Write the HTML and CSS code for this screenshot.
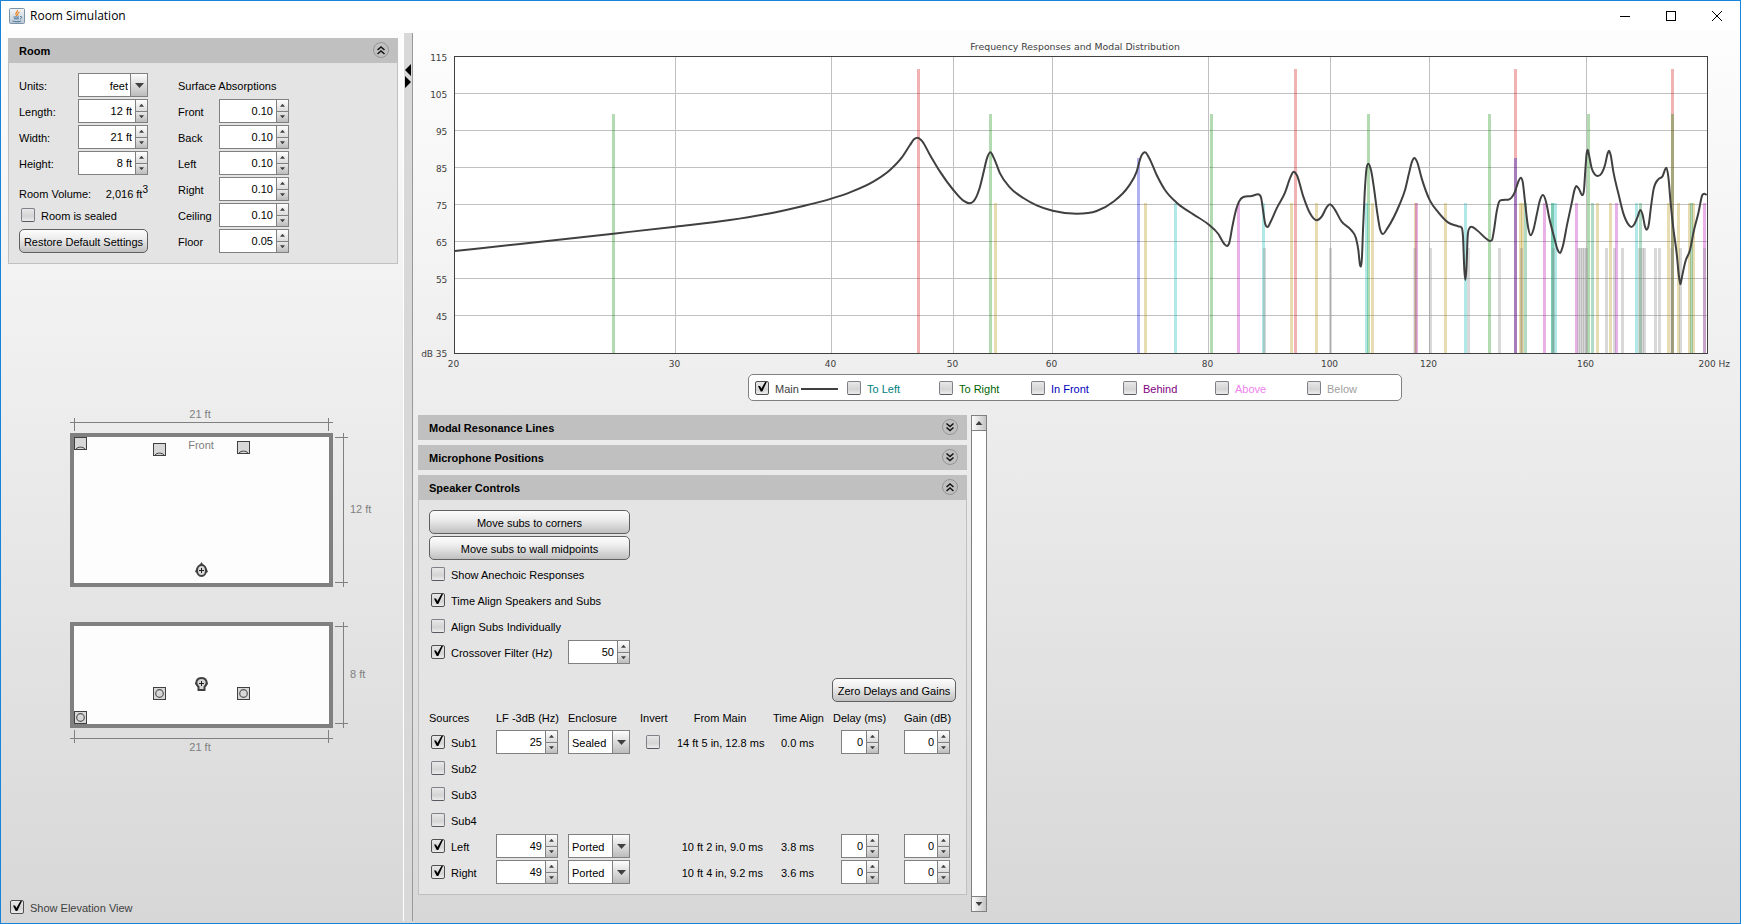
FILE: index.html
```html
<!DOCTYPE html>
<html lang="en">
<head>
<meta charset="utf-8">
<title>Room Simulation</title>
<link rel="stylesheet" href="styles.css">
</head>
<body>
<svg width="0" height="0" class="defs" aria-hidden="true">
  <symbol id="chev-down" viewBox="0 0 16 16"><circle cx="8" cy="8" r="7.5" fill="none" stroke="#959595"/><path d="M4.5 4.5 8 7.5 11.5 4.5M4.5 8.5 8 11.5 11.5 8.5" fill="none" stroke="#111" stroke-width="1.5"/></symbol>
  <symbol id="chev-up" viewBox="0 0 16 16"><circle cx="8" cy="8" r="7.5" fill="none" stroke="#959595"/><path d="M4.5 8 8 5 11.5 8M4.5 12 8 9 11.5 12" fill="none" stroke="#111" stroke-width="1.5"/></symbol>
</svg>
<div class="window">
  <header class="titlebar">
    <svg class="app-icon" viewBox="0 0 16 16" width="16" height="16">
      <defs><linearGradient id="ic" x1="0" y1="0" x2="0" y2="1"><stop offset="0" stop-color="#f4f6f8"/><stop offset="1" stop-color="#bcc8d4"/></linearGradient></defs>
      <rect x=".5" y=".5" width="15" height="15" rx="1" fill="url(#ic)" stroke="#7d93a8"/>
      <path d="M8.5 2C9 4 6 4.500 7 6.500L8 8M10.500 4C8 5.500 8.500 6 9 7.500" fill="none" stroke="#e8801c" stroke-width="1.200"/>
      <path d="M4.500 9H10M5 10.800H10M3.500 13C6 14 10 14 12 13M11 8.500C13.500 8 13 10.500 11 11" fill="none" stroke="#44749c"/>
    </svg>
    <h1 class="window-title">Room Simulation</h1>
    <div class="window-controls">
      <button type="button" aria-label="Minimize"><svg viewBox="0 0 12 12" width="12" height="12"><path d="M1 6.500H11" stroke="#000"/></svg></button>
      <button type="button" aria-label="Maximize"><svg viewBox="0 0 12 12" width="12" height="12"><rect x="1.500" y="1.500" width="9" height="9" fill="none" stroke="#000"/></svg></button>
      <button type="button" aria-label="Close"><svg viewBox="0 0 12 12" width="12" height="12"><path d="M1 1 11 11M11 1 1 11" stroke="#000"/></svg></button>
    </div>
  </header>

  <main class="main">
    <aside class="side">
      <section class="panel">
        <div class="panel-head"><h2>Room</h2><button type="button" class="toggle" aria-label="Collapse Room"><svg><use href="#chev-up"/></svg></button></div>
        <div class="panel-body room">
          <div class="room-size">
            <label for="units">Units:</label>
            <span class="combo combo-right"><select id="units"><option>feet</option><option>metres</option></select></span>
            <label for="len">Length:</label>
            <span class="spin"><input id="len" type="text" value="12 ft"><span class="steps"><button type="button" aria-label="Increase"></button><button type="button" aria-label="Decrease"></button></span></span>
            <label for="wid">Width:</label>
            <span class="spin"><input id="wid" type="text" value="21 ft"><span class="steps"><button type="button" aria-label="Increase"></button><button type="button" aria-label="Decrease"></button></span></span>
            <label for="hei">Height:</label>
            <span class="spin"><input id="hei" type="text" value="8 ft"><span class="steps"><button type="button" aria-label="Increase"></button><button type="button" aria-label="Decrease"></button></span></span>
            <div class="volume"><span>Room Volume:</span><span>2,016 ft<sup>3</sup></span></div>
            <label class="check wide"><input type="checkbox">Room is sealed</label>
            <button type="button" class="btn wide">Restore Default Settings</button>
          </div>
          <div class="absorb">
            <span class="wide">Surface Absorptions</span>
            <label for="a1">Front</label>
            <span class="spin"><input id="a1" type="text" value="0.10"><span class="steps"><button type="button" aria-label="Increase"></button><button type="button" aria-label="Decrease"></button></span></span>
            <label for="a2">Back</label>
            <span class="spin"><input id="a2" type="text" value="0.10"><span class="steps"><button type="button" aria-label="Increase"></button><button type="button" aria-label="Decrease"></button></span></span>
            <label for="a3">Left</label>
            <span class="spin"><input id="a3" type="text" value="0.10"><span class="steps"><button type="button" aria-label="Increase"></button><button type="button" aria-label="Decrease"></button></span></span>
            <label for="a4">Right</label>
            <span class="spin"><input id="a4" type="text" value="0.10"><span class="steps"><button type="button" aria-label="Increase"></button><button type="button" aria-label="Decrease"></button></span></span>
            <label for="a5">Ceiling</label>
            <span class="spin"><input id="a5" type="text" value="0.10"><span class="steps"><button type="button" aria-label="Increase"></button><button type="button" aria-label="Decrease"></button></span></span>
            <label for="a6">Floor</label>
            <span class="spin"><input id="a6" type="text" value="0.05"><span class="steps"><button type="button" aria-label="Increase"></button><button type="button" aria-label="Decrease"></button></span></span>
          </div>
        </div>
      </section>

      <svg class="plan" viewBox="22 410 362 345" width="362" height="345" role="img" aria-label="Room plan and elevation">
        <defs>
          <g id="spk-top"><rect x=".5" y=".5" width="12" height="12" fill="#d8d8d8" stroke="#404040"/><path d="M2 12C4 9.500 9 9.500 11 12" fill="none" stroke="#404040"/></g>
          <g id="spk-front"><rect x=".5" y=".5" width="12" height="12" fill="#d8d8d8" stroke="#404040"/><circle cx="6.500" cy="6.500" r="3.800" fill="none" stroke="#555" stroke-width="1.200"/></g>
        </defs>
        <rect x="72" y="436" width="259" height="150" class="wall"/>
        <rect x="72" y="625" width="259" height="102" class="wall"/>
        <path class="dim" d="M70 423.500H333M74.500 419V432M328.500 419V432M343.500 434V588M335 438.500H348M335 583.500H348M343.500 623V729M335 627.500H348M335 724.500H348M70 739.500H333M74.500 731V744M328.500 731V744"/>
        <g class="plan-text">
          <text x="200" y="419" text-anchor="middle">21 ft</text>
          <text x="201" y="450" text-anchor="middle">Front</text>
          <text x="350" y="514">12 ft</text>
          <text x="350" y="679">8 ft</text>
          <text x="200" y="752" text-anchor="middle">21 ft</text>
        </g>
        <use href="#spk-top" x="74" y="438"/><use href="#spk-top" x="153" y="444"/><use href="#spk-top" x="237" y="442"/>
        <use href="#spk-front" x="74" y="712"/><use href="#spk-front" x="153" y="688"/><use href="#spk-front" x="237" y="688"/>
        <path d="M201.500 563 204 567H199ZM196.500 569 195 573 198 574ZM206.500 569 208 573 205 574Z" fill="#404040"/>
        <ellipse cx="201.500" cy="571.500" rx="4.500" ry="5.500" fill="#d8d8d8" stroke="#404040" stroke-width="2"/>
        <path d="M199 571.500H204M201.500 569V574" stroke="#222"/>
        <path d="M196.500 682 195 684.500 196.500 687ZM206.500 682 208 684.500 206.500 687Z" fill="#404040"/>
        <path d="M198.500 691V688C194 683 197.500 679 201.500 679S209 683 204.500 688V691Z" fill="#d8d8d8" stroke="#404040" stroke-width="2"/>
        <path d="M199 684.500H204M201.500 682V687" stroke="#222"/>
      </svg>

      <label class="check soft"><input type="checkbox" checked>Show Elevation View</label>
    </aside>

    <div class="splitter" role="separator">
      <svg width="8" height="26" viewBox="1 0 8 26"><path d="M8 0V12L2 6ZM2 12V24L8 18Z" fill="#000"/></svg>
    </div>

    <div class="content">
      <svg id="chart" class="chart" viewBox="9 3 3981 1020" role="img" aria-label="Frequency Responses and Modal Distribution"></svg>

      <div class="legend">
        <label class="check c-main"><input type="checkbox" checked>Main<i></i></label>
        <label class="check c-left"><input type="checkbox">To Left</label>
        <label class="check c-right"><input type="checkbox">To Right</label>
        <label class="check c-front"><input type="checkbox">In Front</label>
        <label class="check c-behind"><input type="checkbox">Behind</label>
        <label class="check c-above"><input type="checkbox">Above</label>
        <label class="check c-below"><input type="checkbox">Below</label>
      </div>

      <div class="lower">
        <div class="panels">
          <section class="panel"><div class="panel-head"><h2>Modal Resonance Lines</h2><button type="button" class="toggle" aria-label="Expand Modal Resonance Lines"><svg><use href="#chev-down"/></svg></button></div></section>
          <section class="panel"><div class="panel-head"><h2>Microphone Positions</h2><button type="button" class="toggle" aria-label="Expand Microphone Positions"><svg><use href="#chev-down"/></svg></button></div></section>
          <section class="panel">
            <div class="panel-head"><h2>Speaker Controls</h2><button type="button" class="toggle" aria-label="Collapse Speaker Controls"><svg><use href="#chev-up"/></svg></button></div>
            <div class="panel-body speakers">
              <div class="options">
                <button type="button" class="btn">Move subs to corners</button>
                <button type="button" class="btn">Move subs to wall midpoints</button>
                <label class="check"><input type="checkbox">Show Anechoic Responses</label>
                <label class="check"><input type="checkbox" checked>Time Align Speakers and Subs</label>
                <label class="check"><input type="checkbox">Align Subs Individually</label>
                <div class="crossover">
                  <label class="check"><input type="checkbox" checked>Crossover Filter (Hz)</label>
                  <span class="spin"><input type="text" value="50" aria-label="Crossover frequency"><span class="steps"><button type="button" aria-label="Increase"></button><button type="button" aria-label="Decrease"></button></span></span>
                </div>
              </div>
              <button type="button" class="btn zero">Zero Delays and Gains</button>
              <table class="sources">
                <colgroup><col class="w-src"><col class="w-lf"><col class="w-enc"><col class="w-inv"><col class="w-from"><col class="w-align"><col class="w-delay"><col class="w-gain"></colgroup>
                <thead><tr><th>Sources</th><th>LF -3dB (Hz)</th><th>Enclosure</th><th>Invert</th><th class="mid">From Main</th><th>Time Align</th><th>Delay (ms)</th><th>Gain (dB)</th></tr></thead>
                <tbody>
                  <tr>
                    <td><label class="check"><input type="checkbox" checked>Sub1</label></td>
                    <td><span class="spin"><input type="text" value="25" aria-label="Sub1 LF"><span class="steps"><button type="button" aria-label="Increase"></button><button type="button" aria-label="Decrease"></button></span></span></td>
                    <td><span class="combo"><select aria-label="Sub1 enclosure"><option>Sealed</option><option>Ported</option></select></span></td>
                    <td><label class="check inv"><input type="checkbox" aria-label="Invert Sub1"></label></td>
                    <td class="num">14 ft 5 in, 12.8 ms</td><td class="align">0.0 ms</td>
                    <td><span class="spin delay"><input type="text" value="0" aria-label="Sub1 delay"><span class="steps"><button type="button" aria-label="Increase"></button><button type="button" aria-label="Decrease"></button></span></span></td>
                    <td><span class="spin"><input type="text" value="0" aria-label="Sub1 gain"><span class="steps"><button type="button" aria-label="Increase"></button><button type="button" aria-label="Decrease"></button></span></span></td>
                  </tr>
                  <tr><td><label class="check"><input type="checkbox">Sub2</label></td><td colspan="7"></td></tr>
                  <tr><td><label class="check"><input type="checkbox">Sub3</label></td><td colspan="7"></td></tr>
                  <tr><td><label class="check"><input type="checkbox">Sub4</label></td><td colspan="7"></td></tr>
                  <tr>
                    <td><label class="check"><input type="checkbox" checked>Left</label></td>
                    <td><span class="spin"><input type="text" value="49" aria-label="Left LF"><span class="steps"><button type="button" aria-label="Increase"></button><button type="button" aria-label="Decrease"></button></span></span></td>
                    <td><span class="combo"><select aria-label="Left enclosure"><option>Ported</option><option>Sealed</option></select></span></td>
                    <td></td>
                    <td class="num">10 ft 2 in, 9.0 ms</td><td class="align">3.8 ms</td>
                    <td><span class="spin delay"><input type="text" value="0" aria-label="Left delay"><span class="steps"><button type="button" aria-label="Increase"></button><button type="button" aria-label="Decrease"></button></span></span></td>
                    <td><span class="spin"><input type="text" value="0" aria-label="Left gain"><span class="steps"><button type="button" aria-label="Increase"></button><button type="button" aria-label="Decrease"></button></span></span></td>
                  </tr>
                  <tr>
                    <td><label class="check"><input type="checkbox" checked>Right</label></td>
                    <td><span class="spin"><input type="text" value="49" aria-label="Right LF"><span class="steps"><button type="button" aria-label="Increase"></button><button type="button" aria-label="Decrease"></button></span></span></td>
                    <td><span class="combo"><select aria-label="Right enclosure"><option>Ported</option><option>Sealed</option></select></span></td>
                    <td></td>
                    <td class="num">10 ft 4 in, 9.2 ms</td><td class="align">3.6 ms</td>
                    <td><span class="spin delay"><input type="text" value="0" aria-label="Right delay"><span class="steps"><button type="button" aria-label="Increase"></button><button type="button" aria-label="Decrease"></button></span></span></td>
                    <td><span class="spin"><input type="text" value="0" aria-label="Right gain"><span class="steps"><button type="button" aria-label="Increase"></button><button type="button" aria-label="Decrease"></button></span></span></td>
                  </tr>
                </tbody>
              </table>
            </div>
          </section>
        </div>
        <div class="scrollbar">
          <button type="button" aria-label="Scroll up"></button>
          <div class="track"></div>
          <button type="button" class="down" aria-label="Scroll down"></button>
        </div>
      </div>
    </div>
  </main>
</div>
<script src="chart.js"></script>
</body>
</html>
```
FILE: styles.css
```css
* { box-sizing: border-box; }
body {
  margin: 0;
  font: 11px/13px "Liberation Sans", Arial, sans-serif;
  color: #000;
}
.defs { position: absolute; }
h1, h2 { margin: 0; font-size: inherit; }
button, input, select { font: inherit; color: inherit; margin: 0; padding: 0; border: 0; border-radius: 0; }

.window {
  display: flex;
  flex-direction: column;
  min-height: 100vh;
  border: 1px solid #1883d7;
}
.titlebar {
  display: flex;
  align-items: center;
  height: 30px;
  padding-left: 8px;
  background: #fff;
}
.app-icon { margin-right: 5px; }
.window-title { font: 12px/16px "Open Sans", "Noto Sans", sans-serif; }
.window-controls { display: flex; margin-left: auto; }
.window-controls button { width: 46px; height: 28px; background: none; display: flex; align-items: center; justify-content: center; }

.main {
  flex: 1;
  display: flex;
  background: linear-gradient(#fdfdfd, #d7d7d7);
}
.side {
  flex: 0 0 402px;
  display: flex;
  flex-direction: column;
  justify-content: space-between;
  padding: 7px 5px 8px 7px;
}
.side > .check { padding-left: 2px; }
.soft { color: #404040; }

.panel-head {
  display: flex;
  align-items: center;
  justify-content: space-between;
  height: 25px;
  padding: 0 9px 0 11px;
  background: #c0c0c0;
}
.panel-head h2 { font-weight: bold; padding-top: 2px; }
.toggle { width: 16px; height: 16px; background: none; margin-bottom: 2px; }
.toggle svg { display: block; width: 16px; height: 16px; }
.panel-body { border: 1px solid #c0c0c0; border-top: 0; background: #e4e4e4; padding: 10px; }

.room { display: flex; gap: 30px; }
.room-size, .absorb { display: grid; grid-auto-rows: 24px; gap: 2px 0; align-items: center; }
.room-size { grid-template-columns: 59px 70px; }
.absorb { grid-template-columns: 41px 70px; }
.room-size > label[for], .absorb > label, .absorb > .wide { padding-top: 2px; }
.wide { grid-column: 1 / -1; }
.volume { grid-column: 1 / -1; display: flex; justify-content: space-between; align-self: end; height: 13px; }
.volume sup { font-size: 10px; line-height: 0; vertical-align: 5px; }

.spin, .combo {
  display: flex;
  position: relative;
  width: 100%;
  height: 24px;
  border: 1px solid #808080;
  background: #fff;
}
.spin input { flex: 1; min-width: 0; width: 0; padding: 0 3px 0 0; text-align: right; background: #fff; }
.steps { display: flex; flex-direction: column; width: 12px; border-left: 1px solid #808080; }
.steps button { flex: 1; display: flex; align-items: center; justify-content: center; background: linear-gradient(#fdfdfd, #dcdcdc); }
.steps button + button { border-top: 1px solid #808080; background: linear-gradient(#e8e8e8, #bcbcbc); }
.steps button::before { content: ""; width: 5px; height: 3px; background: #404040; clip-path: polygon(50% 0, 100% 100%, 0 100%); }
.steps button + button::before { clip-path: polygon(0 0, 100% 0, 50% 100%); }

.combo select { appearance: none; width: 100%; padding: 2px 19px 0 3px; background: none; }
.combo-right select { text-align-last: right; }
.combo::before {
  content: "";
  position: absolute;
  top: 0; right: 0; bottom: 0;
  width: 16px;
  border-left: 1px solid #808080;
  background: linear-gradient(#fdfdfd, #bcbcbc);
  pointer-events: none;
}
.combo::after {
  content: "";
  position: absolute;
  top: 9px; right: 3px;
  width: 9px; height: 5px;
  background: #404040;
  clip-path: polygon(0 0, 100% 0, 50% 100%);
  pointer-events: none;
}

.btn {
  height: 24px;
  padding-top: 2px;
  border: 1px solid #606060;
  border-radius: 5px;
  background: linear-gradient(#fdfdfd, #ececec 40%, #c0c0c0);
  text-align: center;
}

/* The caption sits slightly lower than the middle of its box */
.check { display: flex; align-items: flex-end; gap: 6px; height: 16px; }
.check input {
  appearance: none;
  position: relative;
  flex: none;
  width: 14px;
  height: 14px;
  margin-bottom: 1px;
  border: 1px solid #808088;
  border-bottom-color: #585860;
  border-radius: 2px;
  background: linear-gradient(#e8e8e8, #d4d4d4 60%, #ececec);
}
.check input:checked { border-color: #505050; }
.check input:checked::after {
  content: "";
  position: absolute;
  left: 2px; top: 0;
  width: 9px; height: 10px;
  background: #000;
  clip-path: polygon(0 45%, 22% 45%, 38% 70%, 82% 0, 100% 0, 48% 100%, 30% 100%);
}
.room .check, .speakers .check { padding-left: 2px; }

.plan { display: block; align-self: center; flex: none; }
.wall { fill: #fdfdfd; stroke: #808080; stroke-width: 4; }
.dim { fill: none; stroke: #808080; }
.plan-text { fill: #808080; font-size: 11px; }

.splitter {
  flex: 0 0 10px;
  margin: 2px 0;
  padding-top: 31px;
  border-left: 1px solid #fff;
  border-right: 1px solid #999;
  background: #d8d8d8;
}
.splitter svg { display: block; }

.content { flex: 1; min-width: 0; display: flex; flex-direction: column; padding-bottom: 11px; }
.chart { display: block; width: 100%; height: auto; }
.chart text { font-family: "DejaVu Sans", sans-serif; font-size: 27px; fill: #404040; }
.chart .chart-title { font-size: 28px; }

.legend {
  align-self: center;
  display: grid;
  grid-template-columns: repeat(7, 92px);
  align-items: center;
  height: 27px;
  margin: 3px 3px 0 0;
  padding: 0 2px 0 6px;
  border: 1px solid #808080;
  border-radius: 5px;
  background: #fff;
}
.c-main { color: #404040; }
.c-main i { width: 37px; height: 2px; margin: 0 0 6px -4px; background: #404040; }
.c-left { color: #008080; }
.c-right { color: #006400; }
.c-front { color: #0000c0; }
.c-behind { color: #800080; }
.c-above { color: #ee82ee; }
.c-below { color: #a0a0a0; }

.lower { flex: 1; display: flex; gap: 4px; margin: 14px 0 0 5px; }
.panels { flex: 0 0 549px; display: flex; flex-direction: column; gap: 5px; }
.options { display: grid; grid-auto-rows: 24px; gap: 2px; align-items: center; width: 201px; }
.crossover { display: flex; align-items: center; justify-content: space-between; }
.crossover .spin { width: 62px; }
.zero { display: block; width: 124px; margin: 14px 0 2px auto; }
.sources { table-layout: fixed; width: 521px; border-collapse: collapse; }
.sources th, .sources td { padding: 0 0 2px; text-align: left; font-weight: normal; white-space: nowrap; height: 26px; vertical-align: middle; }
.sources th { padding: 2px 0 0; }
.sources td:nth-child(2), .sources td:nth-child(3):not(:last-child) { padding-right: 10px; }
.sources .mid { text-align: center; padding-right: 10px; }
.sources td.num { text-align: right; padding: 0 10px 0 0; }
.sources td.align { padding: 0 0 0 8px; }
.sources .inv { padding-left: 6px; }
.sources .delay { width: 38px; margin-left: 8px; }
.w-src { width: 67px; }
.w-lf, .w-enc { width: 72px; }
.w-inv { width: 37px; }
.w-from { width: 96px; }
.w-align { width: 60px; }
.w-delay { width: 71px; }
.w-gain { width: 46px; }
.speakers { padding-bottom: 8px; }

.scrollbar { display: flex; flex-direction: column; width: 16px; border: 1px solid #808080; background: #fff; }
.scrollbar button { height: 15px; border-bottom: 1px solid #808080; background: linear-gradient(90deg, #fdfdfd, #c4c4c4); display: flex; align-items: center; justify-content: center; }
.scrollbar .down { border-bottom: 0; border-top: 1px solid #808080; }
.scrollbar button::before { content: ""; width: 7px; height: 4px; background: #404040; clip-path: polygon(50% 0, 100% 100%, 0 100%); }
.scrollbar .down::before { clip-path: polygon(0 0, 100% 0, 50% 100%); }
.track { flex: 1; }
```
FILE: chart.js
```js
const NS = "http://www.w3.org/2000/svg";
const chart = document.getElementById("chart");
const LEFT = 133.5, RIGHT = 3892.5, TOP = 79.5, BOTTOM = 970.5;

function add(name, attrs, text) {
  const el = document.createElementNS(NS, name);
  for (const key in attrs) el.setAttribute(key, attrs[key]);
  if (text) el.textContent = text;
  chart.appendChild(el);
}

add("rect", { x: LEFT, y: TOP, width: RIGHT - LEFT, height: BOTTOM - TOP, fill: "#fff" });

// Horizontal grid and level labels
[115, 105, 95, 85, 75, 65, 55, 45, 35].forEach((level, i) => {
  const y = 79.5 + i * 111;
  if (i > 0 && i < 8) add("path", { d: `M${LEFT} ${y}H${RIGHT}`, stroke: "#c0c0c0", "stroke-width": 3 });
  add("text", { x: 112, y: y + 13, "text-anchor": "end" }, level === 35 ? "dB 35" : String(level));
});

// Vertical grid and frequency labels
[[20, 133.5], [30, 796.5], [40, 1264.5], [50, 1630.5], [60, 1927.5], [80, 2395.5], [100, 2761.5], [120, 3058.5], [160, 3529.5]].forEach(([f, x]) => {
  if (f > 20) add("path", { d: `M${x} ${TOP}V${BOTTOM}`, stroke: "#c0c0c0", "stroke-width": 3 });
  add("text", { x: x - 3, y: 1011, "text-anchor": "middle" }, String(f));
});
add("text", { x: 3913, y: 1011, "text-anchor": "middle" }, "200 Hz");
add("text", { x: 1995, y: 59, "text-anchor": "middle", class: "chart-title" }, "Frequency Responses and Modal Distribution");

// Modal resonance lines: colour, top edge, centre positions
[
  ["#cc0000", 117, [1525, 2656, 3316, 3787]],
  ["#008800", 252, [610, 1741, 2404, 2875, 3238, 3535, 3787]],
  ["#0000cc", 384, [2185, 3316]],
  ["#af8c00", 519, [1756, 2206, 2644, 2719, 2887, 3016, 3106, 3331, 3337, 3562, 3601, 3775, 3805, 3838, 3850]],
  ["#00b2b2", 519, [2296, 2560, 2869, 3166, 3427, 3436, 3679]],
  ["#b200b2", 519, [2485, 3019, 3403, 3499, 3619, 3883]],
  ["#008840", 519, [3346, 3427, 3547, 3691, 3844]],
  ["#808080", 654, [2563, 2761, 3014, 3061, 3175, 3268, 3334, 3430, 3505, 3511, 3517, 3523, 3529, 3589, 3613, 3637, 3688, 3697, 3703, 3736, 3748, 3785, 3811, 3883]]
].forEach(([fill, top, xs]) => xs.forEach(x =>
  add("rect", { x: x - 4, y: top, width: 9, height: BOTTOM - top, fill, "fill-opacity": 0.3 })));

// Main response trace, three sections with their own x offset
const trace = [
  [0, [134,663, 330,642, 610,611, 796,590, 960,570, 1090,548, 1180,528, 1264,506]],
  [1320, [0,487, 70,455, 120,420, 155,383, 180,345, 192,328, 203,323, 215,332, 240,375, 270,425, 310,480, 340,512, 358,520, 375,508, 390,470, 400,430, 410,388, 421,367, 432,385, 450,430, 480,473, 520,504, 560,526, 608,542, 680,551, 740,543, 790,515, 835,470, 860,425, 873,380, 885,367, 897,383, 920,435, 945,480, 980,518, 1030,553, 1075,583, 1105,612, 1123,642, 1131,648, 1138,638, 1147,590, 1158,540, 1167,515, 1180,501, 1205,498, 1224,493, 1233,502, 1239,540, 1246,583, 1253,591, 1262,575, 1280,535, 1305,488, 1322,440, 1331,425]],
  [2640, [20,434, 40,500, 60,550, 80,571, 95,560, 110,532, 120,523, 130,532, 155,575, 185,602, 198,625, 205,660, 210,705, 213,710, 216,680, 219,600, 224,490, 229,420, 235,401, 243,420, 252,475, 262,550, 270,597, 279,612, 292,595, 328,525, 345,480, 357,430, 366,395, 373,384, 381,395, 395,445, 420,512, 445,547, 475,578, 505,589, 515,593, 519,620, 523,720, 526,750, 529,720, 533,620, 538,595, 544,590, 560,600, 590,627, 600,633, 606,630, 612,600, 620,545, 628,514, 638,510, 655,509, 675,485, 685,455, 692,443, 698,455, 705,515, 714,590, 722,616, 730,600, 740,555, 750,510, 759,495, 768,515, 778,565, 792,620, 803,660, 810,669, 818,650, 832,580, 845,520, 854,478, 859,468, 867,477, 877,496, 882,480, 886,420, 890,370, 893,359, 897,375, 905,415, 915,434, 923,438, 935,430, 945,405, 953,370, 957,362, 962,375, 970,425, 985,490, 1000,550, 1015,583, 1024,591, 1033,583, 1043,560, 1051,540, 1058,555, 1065,590, 1070,599, 1076,585, 1083,530, 1090,482, 1105,448, 1117,440, 1129,413, 1135,440, 1142,520, 1150,595, 1160,670, 1167,740, 1171,763, 1176,740, 1186,695, 1200,660, 1212,600, 1225,550, 1237,495, 1243,491, 1250,495]]
];
const pts = [];
trace.forEach(([dx, flat]) => {
  for (let i = 0; i < flat.length; i += 2) pts.push([flat[i] + dx, flat[i + 1]]);
});

// Cubic through the points, tangents limited so that peaks do not overshoot
const n = pts.length;
const slope = pts.slice(1).map((p, i) => (p[1] - pts[i][1]) / (p[0] - pts[i][0]));
const tangent = pts.map((p, i) => {
  if (i === 0) return slope[0];
  if (i === n - 1) return slope[n - 2];
  const a = slope[i - 1], b = slope[i];
  if (a * b <= 0) return 0;
  const h0 = p[0] - pts[i - 1][0], h1 = pts[i + 1][0] - p[0];
  const m = (a * h1 + b * h0) / (h0 + h1);
  return Math.sign(m) * Math.min(Math.abs(m), 3 * Math.abs(a), 3 * Math.abs(b));
});
let d = `M${pts[0]}`;
for (let i = 1; i < n; i++) {
  const [x0, y0] = pts[i - 1], [x1, y1] = pts[i], h = (x1 - x0) / 3;
  d += `C${x0 + h} ${y0 + tangent[i - 1] * h} ${x1 - h} ${y1 - tangent[i] * h} ${x1} ${y1}`;
}
add("path", { d, fill: "none", stroke: "#404040", "stroke-width": 6, "stroke-linejoin": "round" });
add("rect", { x: LEFT, y: TOP, width: RIGHT - LEFT, height: BOTTOM - TOP, fill: "none", stroke: "#404040", "stroke-width": 3 });
```
